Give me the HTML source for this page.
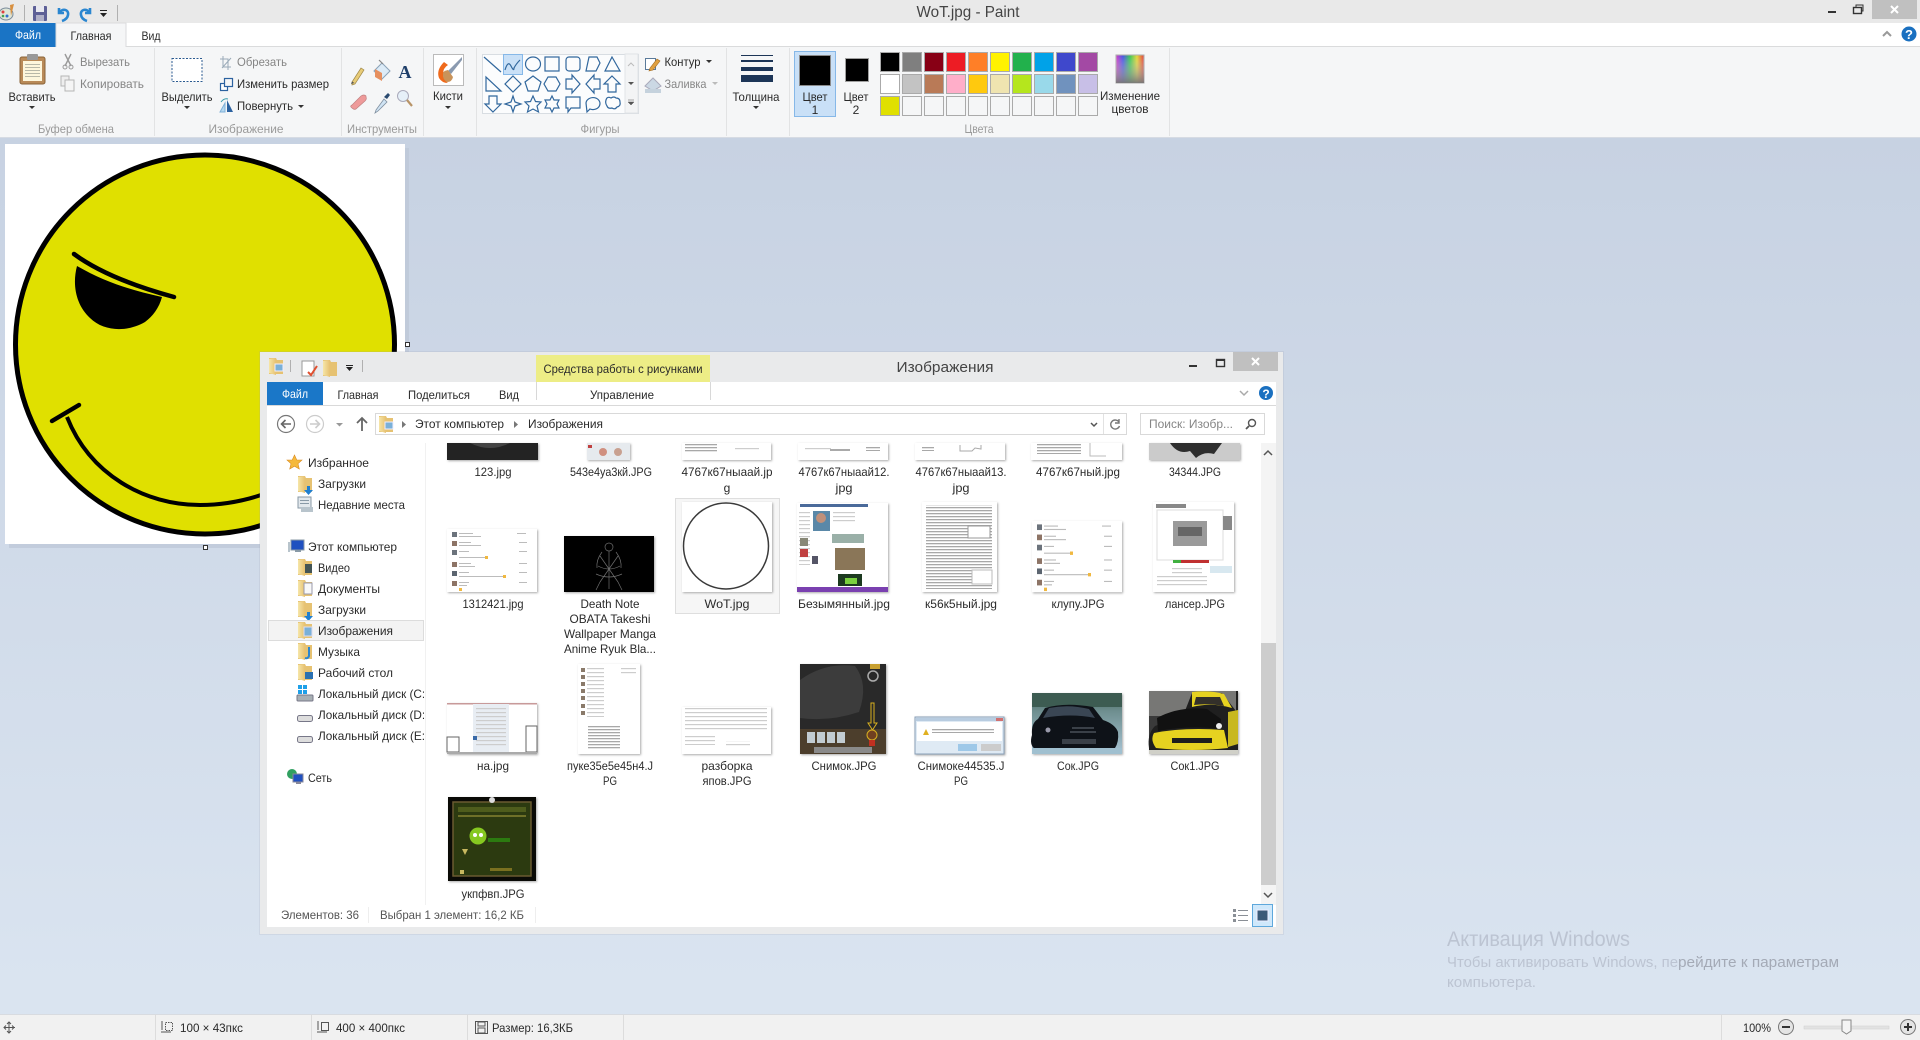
<!DOCTYPE html>
<html lang="ru"><head><meta charset="utf-8"><title>WoT.jpg - Paint</title>
<style>
html,body{margin:0;padding:0;background:#dbe5f1}
body{width:1920px;height:1040px;overflow:hidden}
svg{display:block;filter:blur(.35px)}
text{font-family:"Liberation Sans","Noto Sans CJK SC",sans-serif;font-size:12px;fill:#2a2a2a}
.c{text-anchor:middle}
.g{fill:#858585}
.l{fill:#9a9a9a}
.sh{fill:none;stroke:#31679d;stroke-width:1.2}
.th{filter:drop-shadow(1px 1px 1px #aaa)}
</style></head><body>
<svg width="1920" height="1040" viewBox="0 0 1920 1040" xmlns="http://www.w3.org/2000/svg">
<defs>
<linearGradient id="bg" x1="0" y1="0" x2="0" y2="1"><stop offset="0" stop-color="#c4cfe0"/><stop offset="1" stop-color="#dbe5f1"/></linearGradient>
<linearGradient id="rb" x1="0" y1="0" x2="1" y2="0"><stop offset="0" stop-color="#d020c0"/><stop offset=".25" stop-color="#3040e0"/><stop offset=".5" stop-color="#20c040"/><stop offset=".75" stop-color="#e0d020"/><stop offset="1" stop-color="#e02020"/></linearGradient>
<linearGradient id="rb2" x1="0" y1="0" x2="0" y2="1"><stop offset="0" stop-color="#fff" stop-opacity=".1"/><stop offset="1" stop-color="#777" stop-opacity=".95"/></linearGradient>
<linearGradient id="sky" x1="0" y1="0" x2="0" y2="1"><stop offset="0" stop-color="#3f5f55"/><stop offset=".3" stop-color="#6f8f90"/><stop offset="1" stop-color="#a8c4d4"/></linearGradient>
<linearGradient id="fold" x1="0" y1="0" x2="1" y2="0"><stop offset="0" stop-color="#f6e6a8"/><stop offset="1" stop-color="#e6c070"/></linearGradient>
<pattern id="tl" width="60" height="3" patternUnits="userSpaceOnUse"><rect width="60" height="1.300" fill="#a8a8a8"/></pattern>
<pattern id="tl2" width="60" height="4" patternUnits="userSpaceOnUse"><rect width="60" height="1.200" fill="#cdcdcd"/></pattern>
<clipPath id="side"><rect x="267" y="443" width="157" height="400"/></clipPath>
<g id="folder"><path d="M0 0h7l1 2h6v14H0z" fill="#e6c272"/><path d="M0 1l7-1v17l-7-2z" fill="url(#fold)"/></g>
<g id="chat">
<rect width="90" height="63" fill="#fff"/>
<g fill="#6c737c"><rect x="5" y="3" width="5" height="5"/><rect x="5" y="21" width="5" height="5"/></g>
<g fill="#8d7466"><rect x="5" y="12" width="5" height="5"/><rect x="5" y="33" width="5" height="5"/><rect x="5" y="52" width="5" height="5"/></g>
<rect x="5" y="42" width="5" height="5" fill="#5c6570"/>
<g fill="#bcbcbc"><rect x="12" y="4" width="14" height="1"/><rect x="12" y="7" width="22" height="1"/><rect x="12" y="13" width="12" height="1"/><rect x="12" y="16" width="22" height="1"/><rect x="12" y="22" width="10" height="1"/><rect x="12" y="28" width="26" height="1"/><rect x="12" y="34" width="12" height="1"/><rect x="12" y="37" width="16" height="1"/><rect x="12" y="43" width="10" height="1"/><rect x="12" y="47" width="44" height="1"/><rect x="12" y="53" width="10" height="1"/><rect x="12" y="56" width="8" height="1"/><rect x="70" y="4" width="9" height="1"/><rect x="72" y="13" width="8" height="1"/><rect x="72" y="22" width="8" height="1"/><rect x="72" y="34" width="8" height="1"/><rect x="72" y="43" width="8" height="1"/><rect x="72" y="53" width="8" height="1"/></g>
<g fill="#f0b840"><rect x="38" y="27" width="3" height="3"/><rect x="56" y="46" width="3" height="3"/><rect x="12" y="59" width="3" height="3"/></g>
</g>
</defs>

<!-- Paint chrome -->
<rect width="1920" height="1040" fill="url(#bg)"/>
<rect width="1920" height="23" fill="#e9e9e9"/>
<rect y="23" width="1920" height="24" fill="#fff"/>
<rect y="46" width="1920" height="1" fill="#dadbdc"/>
<rect y="47" width="1920" height="90" fill="#f5f6f7"/>
<rect y="137" width="1920" height="1" fill="#d6dbe3"/>

<!-- QAT -->
<ellipse cx="6" cy="14" rx="7" ry="6" fill="#dfe6d8" stroke="#7a8a9a"/><circle cx="3" cy="12" r="1.500" fill="#e04040"/><circle cx="7" cy="16" r="1.500" fill="#3070d0"/><circle cx="3" cy="16" r="1.300" fill="#40a050"/><path d="M10 5l4-1l-3 12z" fill="#d89040"/>
<rect x="24" y="5" width="1" height="16" fill="#b0b0b0"/>
<rect x="33" y="6" width="14" height="15" rx="1" fill="#5d5f96"/><rect x="36" y="6" width="8" height="6" fill="#e8e8f0"/><rect x="36" y="15" width="8" height="6" fill="#b0b0c8"/>
<path d="M59 8v5h5M59 13c3-5 10-4 9 2c-.5 3-3 5-6 6" fill="none" stroke="#2a86d0" stroke-width="2.600"/>
<path d="M90 8v5h-5M90 13c-3-5-10-4-9 2c.5 3 3 5 6 6" fill="none" stroke="#2a86d0" stroke-width="2.600"/>
<rect x="100" y="10" width="7" height="1" fill="#222"/><path d="M100 13h7l-3.500 4z" fill="#222"/>
<rect x="117" y="5" width="1" height="16" fill="#b0b0b0"/>
<text x="968" y="17" class="c" style="font-size:16px;fill:#444" textLength="103" lengthAdjust="spacingAndGlyphs">WoT.jpg - Paint</text>
<rect x="1828" y="11" width="8" height="2" fill="#333"/>
<rect x="1853.500" y="7.500" width="8" height="6" fill="none" stroke="#333" stroke-width="1.400"/><path d="M1856 7V5h7v6h-1.500" fill="none" stroke="#333"/>
<rect x="1872" y="0" width="45" height="19" fill="#c0c0c0"/>
<path d="M1891 6l7 7m0-7l-7 7" stroke="#fff" stroke-width="2"/>
<path d="M1883 36l4-4l4 4" fill="none" stroke="#999" stroke-width="2"/>
<circle cx="1909" cy="34" r="7.500" fill="#1a70c0"/><text x="1909" y="39" class="c" style="font-size:13px;font-weight:bold;fill:#fff">?</text>

<!-- Tabs -->
<rect x="0" y="23" width="56" height="24" fill="#1a74c5"/>
<text x="28" y="39" class="c" style="fill:#fff" textLength="26" lengthAdjust="spacingAndGlyphs">Файл</text>
<path d="M56 47V23h70v24" fill="#f5f6f7" stroke="#dadbdc"/>
<text x="91" y="40" class="c" textLength="41" lengthAdjust="spacingAndGlyphs">Главная</text>
<text x="151" y="40" class="c" textLength="19" lengthAdjust="spacingAndGlyphs">Вид</text>

<!-- group separators -->
<g fill="#e2e3e4"><rect x="154" y="48" width="1" height="88"/><rect x="341" y="48" width="1" height="88"/><rect x="423" y="48" width="1" height="88"/><rect x="476" y="48" width="1" height="88"/><rect x="726" y="48" width="1" height="88"/><rect x="789" y="48" width="1" height="88"/><rect x="1169" y="48" width="1" height="88"/></g>

<!-- Clipboard -->
<rect x="20" y="57" width="25" height="27" rx="2" fill="#b98a58" stroke="#8a6438"/><rect x="23" y="61" width="19" height="20" fill="#fdf6dc"/><g fill="#b8b8a8"><rect x="25" y="64" width="15" height="1"/><rect x="25" y="67" width="15" height="1"/><rect x="25" y="70" width="15" height="1"/><rect x="25" y="73" width="15" height="1"/><rect x="25" y="76" width="15" height="1"/></g><rect x="27" y="54" width="11" height="6" rx="1" fill="#999"/>
<text x="32" y="101" class="c" textLength="47" lengthAdjust="spacingAndGlyphs">Вставить</text>
<path d="M29 106h6l-3 3z" fill="#333"/>
<path d="M65 54l6 12M71 54l-6 12" stroke="#9a9a9a" stroke-width="1.400"/><circle cx="65" cy="67" r="2" fill="none" stroke="#9a9a9a"/><circle cx="71" cy="67" r="2" fill="none" stroke="#9a9a9a"/>
<text x="80" y="66" class="g" textLength="50" lengthAdjust="spacingAndGlyphs">Вырезать</text>
<rect x="61" y="76" width="8" height="10" fill="#eee" stroke="#b5b5b5"/><rect x="65" y="80" width="9" height="11" fill="#f5f5f5" stroke="#b5b5b5"/>
<text x="80" y="88" class="g" textLength="64" lengthAdjust="spacingAndGlyphs">Копировать</text>
<text x="76" y="133" class="c l" textLength="76" lengthAdjust="spacingAndGlyphs">Буфер обмена</text>

<!-- Image -->
<rect x="172" y="58.500" width="30" height="23" fill="#fff" stroke="#2a5a90" stroke-dasharray="2 1.500"/>
<text x="187" y="101" class="c" textLength="51" lengthAdjust="spacingAndGlyphs">Выделить</text>
<path d="M184 106h6l-3 3z" fill="#333"/>
<path d="M223 56v11h8M220 59h8v11" fill="none" stroke="#9aaab8"/><path d="M222 68l9-10" stroke="#9aaab8"/>
<text x="237" y="66" class="g" textLength="50" lengthAdjust="spacingAndGlyphs">Обрезать</text>
<rect x="220.500" y="83.500" width="7" height="7" fill="#fff" stroke="#2c62a0" stroke-width="1.200"/><rect x="224.500" y="78.500" width="8" height="8" fill="#f5f6f7" stroke="#2c62a0" stroke-width="1.200"/>
<text x="237" y="88" textLength="92" lengthAdjust="spacingAndGlyphs">Изменить размер</text>
<path d="M220 112l5-9v9z" fill="#b5d8f0" stroke="#7fb0d8"/><path d="M227 112v-12l6 12z" fill="#2c62a0"/><path d="M221 102q3-4 7-3" fill="none" stroke="#39a"/>
<text x="237" y="110" textLength="56" lengthAdjust="spacingAndGlyphs">Повернуть</text>
<path d="M298 105h6l-3 3z" fill="#333"/>
<text x="246" y="133" class="c l" textLength="75" lengthAdjust="spacingAndGlyphs">Изображение</text>

<!-- Tools -->
<path d="M352 82l9-14l3 2l-9 14l-3 1z" fill="#e8cc78" stroke="#a08848" stroke-width=".7"/><path d="M351 84l1-2.500l2.500 1.500z" fill="#555"/>
<path d="M374 71l8-8l8 8l-8 8z" fill="#dcebf7" stroke="#8aa2b8"/><path d="M375 69l7 4v8l-7-4z" fill="#e69060"/><path d="M379 60l4 4" stroke="#888" stroke-width="1.200"/>
<text x="405" y="78" class="c" style="font-family:'Liberation Serif',serif;font-size:18px;font-weight:bold;fill:#1f3f6a">A</text>
<path d="M352 105l9-9q3-2 5 0l0 1q1 2-1 4l-9 8q-2 1-4-1l-1-1q-1-1 1-2z" fill="#ee9a9a" stroke="#c08080" stroke-width=".7"/>
<path d="M376 110l8-11l3 3l-9 9l-3 2z" fill="#d0e4f4" stroke="#8090a0" stroke-width=".8"/><path d="M384 97l4-4l2 2l-3 4z" fill="#2a4a70"/>
<circle cx="403" cy="96" r="5.500" fill="#e6f0f8" stroke="#aab"/><path d="M407 100l5 6" stroke="#b89468" stroke-width="2.200"/>
<text x="382" y="133" class="c l" textLength="70" lengthAdjust="spacingAndGlyphs">Инструменты</text>

<!-- Brushes -->
<rect x="433.500" y="54.500" width="30" height="31" fill="#fff" stroke="#bbb"/>
<path d="M462 57l-14 14l3 3l11-14z" fill="#8a9ab0"/><path d="M448 70q-6 1-7 6q-1 6 6 6q5 0 6-5z" fill="#c9935a"/><path d="M444 62q-8 8-5 16q3 5 9 5q-6-4-5-9q0-6 5-9z" fill="#ef6a1c"/>
<text x="448" y="100" class="c" textLength="30" lengthAdjust="spacingAndGlyphs">Кисти</text>
<path d="M445 106h6l-3 3z" fill="#333"/>

<!-- Shapes -->
<rect x="482.500" y="54.500" width="156" height="59" fill="#fbfcfd" stroke="#d8dde2"/>
<rect x="503.500" y="54.500" width="19" height="20" fill="#c9e0f7" stroke="#86b8e8"/>
<g class="sh">
<path d="M484 57l17 15"/>
<path d="M505 70q3-10 6-4t3 2q2-4 6-8"/>
<ellipse cx="533" cy="64" rx="7.500" ry="7"/>
<rect x="545" y="57" width="14" height="14"/>
<rect x="566" y="57" width="14" height="14" rx="3"/>
<path d="M586 71l3-14h8l3 6l-4 8z"/>
<path d="M612 57l8 14h-15z"/>
<path d="M486 77v14h15z"/>
<path d="M513 76l8 8l-8 8l-8-8z"/>
<path d="M533 76l8 6l-3 9h-10l-3-9z"/>
<path d="M548 77h8l4 7l-4 7h-8l-4-7z"/>
<path d="M566 79h6v-4l8 9l-8 9v-4h-6z"/>
<path d="M600 79h-6v-4l-8 9l8 9v-4h6z"/>
<path d="M612 76l8 8h-4v8h-8v-8h-4z"/>
<path d="M493 112l8-8h-4v-8h-8v8h-4z"/>
<path d="M513 96l2 6l6 2l-6 2l-2 6l-2-6l-6-2l6-2z"/>
<path d="M533 96l2.500 5.500l5.500.5l-4 4l1.500 6l-5.500-3l-5.500 3l1.500-6l-4-4l5.500-.5z"/>
<path d="M552 96l2 4h5l-2 4l2 4h-5l-2 4l-2-4h-5l2-4l-2-4h5z"/>
<path d="M566 97h14v11h-9l-3 4v-4h-2z"/>
<path d="M586 103a7 6 0 1 1 4 6l-3 3z"/>
<path d="M606 100q1-4 5-2q3-2 5 0q4 0 4 4q1 4-3 5q-2 3-5 1q-4 1-5-2q-2-3-1-6z"/>
</g>
<rect x="625" y="54" width="13" height="59" fill="#f3f4f5" stroke="#e0e3e6"/>
<path d="M628 66l3-3l3 3" fill="none" stroke="#bbb"/><path d="M628 82h6l-3 3z" fill="#555"/><path d="M628 100h6M628 102h6l-3 3z" fill="#555" stroke="#555" stroke-width=".5"/>
<text x="600" y="133" class="c l" textLength="39" lengthAdjust="spacingAndGlyphs">Фигуры</text>
<rect x="645.500" y="58.500" width="10" height="11" fill="#fff" stroke="#5a7a9a"/><path d="M650 68l7-9l3 2l-7 9l-4 1z" fill="#e0a040" stroke="#a06a20" stroke-width=".6"/>
<text x="664.500" y="66" textLength="36" lengthAdjust="spacingAndGlyphs">Контур</text><path d="M706 60h6l-3 3z" fill="#333"/>
<path d="M645 86l8-8l8 8l-8 5z" fill="#cbd8e4" stroke="#aab"/><rect x="645" y="89" width="16" height="4" fill="#c5d2dd"/>
<text x="664.500" y="88" class="g" textLength="42" lengthAdjust="spacingAndGlyphs">Заливка</text><path d="M712 82h6l-3 3z" fill="#bbb"/>

<!-- Thickness -->
<g fill="#1c3557"><rect x="741" y="55" width="32" height="1"/><rect x="741" y="60" width="32" height="2"/><rect x="741" y="67" width="32" height="4"/><rect x="741" y="75" width="32" height="7"/></g>
<text x="756" y="101" class="c" textLength="47" lengthAdjust="spacingAndGlyphs">Толщина</text>
<path d="M753 106h6l-3 3z" fill="#333"/>

<!-- Colors -->
<rect x="794.500" y="51.500" width="41" height="65" fill="#c9e0f7" stroke="#86b8e8"/>
<rect x="799.500" y="55.500" width="31" height="30" fill="#000" stroke="#8a8a8a" stroke-width="1"/>
<text x="815" y="101" class="c" textLength="25" lengthAdjust="spacingAndGlyphs">Цвет</text><text x="815" y="114" class="c">1</text>
<rect x="845.500" y="58.500" width="23" height="23" fill="#000" stroke="#a0a0a0" stroke-width="1"/>
<text x="856" y="101" class="c" textLength="25" lengthAdjust="spacingAndGlyphs">Цвет</text><text x="856" y="114" class="c">2</text>
<g stroke="#aaa">
<rect x="880.500" y="52.500" width="19" height="19" fill="#000"/><rect x="902.500" y="52.500" width="19" height="19" fill="#7f7f7f"/><rect x="924.500" y="52.500" width="19" height="19" fill="#880015"/><rect x="946.500" y="52.500" width="19" height="19" fill="#ed1c24"/><rect x="968.500" y="52.500" width="19" height="19" fill="#ff7f27"/><rect x="990.500" y="52.500" width="19" height="19" fill="#fff200"/><rect x="1012.500" y="52.500" width="19" height="19" fill="#22b14c"/><rect x="1034.500" y="52.500" width="19" height="19" fill="#00a2e8"/><rect x="1056.500" y="52.500" width="19" height="19" fill="#3f48cc"/><rect x="1078.500" y="52.500" width="19" height="19" fill="#a349a4"/>
<rect x="880.500" y="74.500" width="19" height="19" fill="#fff"/><rect x="902.500" y="74.500" width="19" height="19" fill="#c3c3c3"/><rect x="924.500" y="74.500" width="19" height="19" fill="#b97a57"/><rect x="946.500" y="74.500" width="19" height="19" fill="#ffaec9"/><rect x="968.500" y="74.500" width="19" height="19" fill="#ffc90e"/><rect x="990.500" y="74.500" width="19" height="19" fill="#efe4b0"/><rect x="1012.500" y="74.500" width="19" height="19" fill="#b5e61d"/><rect x="1034.500" y="74.500" width="19" height="19" fill="#99d9ea"/><rect x="1056.500" y="74.500" width="19" height="19" fill="#7092be"/><rect x="1078.500" y="74.500" width="19" height="19" fill="#c8bfe7"/>
<rect x="880.500" y="96.500" width="19" height="19" fill="#e0e000"/><rect x="902.500" y="96.500" width="19" height="19" fill="#f5f6f7"/><rect x="924.500" y="96.500" width="19" height="19" fill="#f5f6f7"/><rect x="946.500" y="96.500" width="19" height="19" fill="#f5f6f7"/><rect x="968.500" y="96.500" width="19" height="19" fill="#f5f6f7"/><rect x="990.500" y="96.500" width="19" height="19" fill="#f5f6f7"/><rect x="1012.500" y="96.500" width="19" height="19" fill="#f5f6f7"/><rect x="1034.500" y="96.500" width="19" height="19" fill="#f5f6f7"/><rect x="1056.500" y="96.500" width="19" height="19" fill="#f5f6f7"/><rect x="1078.500" y="96.500" width="19" height="19" fill="#f5f6f7"/>
</g>
<rect x="1116" y="55" width="28" height="28" fill="url(#rb)" stroke="#aaa"/><rect x="1116" y="55" width="28" height="28" fill="url(#rb2)"/>
<text x="1130" y="100" class="c" textLength="60" lengthAdjust="spacingAndGlyphs">Изменение</text>
<text x="1130" y="113" class="c" textLength="37" lengthAdjust="spacingAndGlyphs">цветов</text>
<text x="979" y="133" class="c l" textLength="29" lengthAdjust="spacingAndGlyphs">Цвета</text>

<!-- Canvas -->
<rect x="9" y="148" width="400" height="400" fill="#bcc6d6" opacity=".7"/>
<rect x="5" y="144" width="400" height="400" fill="#fff"/>
<circle cx="205" cy="344.500" r="189.500" fill="#e0e000" stroke="#000" stroke-width="5"/>
<path d="M77 266C72 285 76 305 90 318C104 332 128 332 145 322C153 316 159 308 162 297C130 290 105 282 77 266Z" fill="#000"/>
<path d="M74 254Q108 279 174 297" fill="none" stroke="#000" stroke-width="4.500" stroke-linecap="round"/>
<path d="M67 417C90 475 145 505 200 505C225 505 250 500 275 490" fill="none" stroke="#000" stroke-width="4"/>
<path d="M52 421L79 405" stroke="#000" stroke-width="4.500" stroke-linecap="round"/>
<rect x="405.500" y="342.500" width="4" height="4" fill="#fff" stroke="#333"/>
<rect x="203.500" y="545.500" width="4" height="4" fill="#fff" stroke="#333"/>

<!-- Activation -->
<text x="1447" y="946" style="font-size:21px;fill:#bcc4d2" textLength="183" lengthAdjust="spacingAndGlyphs">Активация Windows</text>
<text x="1447" y="967" style="font-size:15px;fill:#bcc4d2" textLength="231" lengthAdjust="spacingAndGlyphs">Чтобы активировать Windows, пе</text>
<text x="1678" y="967" style="font-size:15px;fill:#a4aab6" textLength="161" lengthAdjust="spacingAndGlyphs">рейдите к параметрам</text>
<text x="1447" y="987" style="font-size:15px;fill:#bcc4d2" textLength="89" lengthAdjust="spacingAndGlyphs">компьютера.</text>

<!-- Status bar -->
<rect y="1014" width="1920" height="26" fill="#f1f1f1"/><rect y="1014" width="1920" height="1" fill="#d8dbe0"/>
<g fill="#dcdcdc"><rect x="155" y="1015" width="1" height="25"/><rect x="311" y="1015" width="1" height="25"/><rect x="467" y="1015" width="1" height="25"/><rect x="623" y="1015" width="1" height="25"/><rect x="1721" y="1015" width="1" height="25"/></g>
<path d="M9 1022v11M4 1027.500h11M7 1024l2-2l2 2M7 1031l2 2l2-2M6 1025.500l-2 2l2 2M12 1025.500l2 2l-2 2" fill="none" stroke="#555"/>
<rect x="165.500" y="1022.500" width="7" height="8" fill="none" stroke="#555" stroke-dasharray="1.500 1"/><path d="M162 1021v9M161 1032h10" stroke="#555"/>
<text x="180" y="1032" textLength="63" lengthAdjust="spacingAndGlyphs">100 × 43пкс</text>
<rect x="321.500" y="1022.500" width="7" height="8" fill="none" stroke="#555"/><path d="M318 1021v9M317 1032h10" stroke="#555"/>
<text x="336" y="1032" textLength="69" lengthAdjust="spacingAndGlyphs">400 × 400пкс</text>
<rect x="475.500" y="1021.500" width="12" height="12" fill="none" stroke="#555"/><rect x="478" y="1022" width="7" height="4" fill="none" stroke="#555"/><rect x="478" y="1028" width="7" height="5" fill="none" stroke="#555"/>
<text x="492" y="1032" textLength="81" lengthAdjust="spacingAndGlyphs">Размер: 16,3КБ</text>
<text x="1743" y="1032" textLength="28" lengthAdjust="spacingAndGlyphs">100%</text>
<circle cx="1786" cy="1027" r="7.500" fill="#e4e4e4" stroke="#777"/><rect x="1782" y="1026" width="8" height="2" fill="#333"/>
<rect x="1804" y="1026" width="85" height="3" fill="#e2e2e2" stroke="#d0d0d0" stroke-width=".5"/>
<path d="M1842 1020h9v11l-4.500 3l-4.500-3z" fill="#f4f4f4" stroke="#888"/>
<circle cx="1908" cy="1027" r="7.500" fill="#e4e4e4" stroke="#777"/><path d="M1904 1027h8M1908 1023v8" stroke="#333" stroke-width="2"/>

<!-- Explorer window -->
<rect x="259" y="351" width="1025" height="584" fill="#9aa3b0" opacity=".18"/>
<rect x="260" y="352" width="1023" height="582" fill="#e9eaeb"/>
<rect x="267" y="382" width="1009" height="545" fill="#fff"/>
<rect x="267" y="405" width="1009" height="1" fill="#d9d9d9"/>

<!-- Explorer title -->
<use href="#folder" x="269" y="358"/><rect x="275" y="364" width="8" height="7" fill="#7ab0d8" stroke="#eef"/>
<rect x="290" y="360" width="1" height="12" fill="#b0b0b0"/>
<rect x="302" y="361" width="12" height="15" fill="#fff" stroke="#999"/><path d="M308 372l3 3l6-9" fill="none" stroke="#e05030" stroke-width="2"/>
<use href="#folder" x="323" y="360"/>
<rect x="346" y="365" width="7" height="1" fill="#222"/><path d="M346 367h7l-3.500 4z" fill="#222"/>
<rect x="362" y="360" width="1" height="12" fill="#b0b0b0"/>
<rect x="536" y="355" width="174" height="27" fill="#eded86"/>
<text x="623" y="373" class="c" textLength="159" lengthAdjust="spacingAndGlyphs">Средства работы с рисунками</text>
<text x="945" y="372" class="c" style="font-size:15px;fill:#444" textLength="97" lengthAdjust="spacingAndGlyphs">Изображения</text>
<rect x="1189" y="365" width="8" height="2" fill="#333"/>
<rect x="1216.500" y="359.500" width="8" height="7" fill="none" stroke="#333" stroke-width="1.400"/><rect x="1216" y="359" width="9" height="2" fill="#333"/>
<rect x="1233" y="352" width="45" height="19" fill="#c0c0c0"/><path d="M1252 358l7 7m0-7l-7 7" stroke="#fff" stroke-width="2"/>

<!-- Explorer tabs -->
<rect x="267" y="382" width="56" height="23" fill="#1a77c8"/>
<text x="295" y="398" class="c" style="fill:#fff" textLength="26" lengthAdjust="spacingAndGlyphs">Файл</text>
<text x="358" y="399" class="c" textLength="41" lengthAdjust="spacingAndGlyphs">Главная</text>
<text x="439" y="399" class="c" textLength="62" lengthAdjust="spacingAndGlyphs">Поделиться</text>
<text x="509" y="399" class="c" textLength="20" lengthAdjust="spacingAndGlyphs">Вид</text>
<text x="622" y="399" class="c" textLength="64" lengthAdjust="spacingAndGlyphs">Управление</text>
<rect x="536" y="382" width="1" height="18" fill="#d8d8d8"/><rect x="710" y="382" width="1" height="18" fill="#d8d8d8"/>
<path d="M1240 391l4 4l4-4" fill="none" stroke="#aaa" stroke-width="1.500"/>
<circle cx="1266" cy="393" r="7" fill="#1a70c0"/><text x="1266" y="398" class="c" style="font-size:12px;font-weight:bold;fill:#fff">?</text>

<!-- Nav -->
<circle cx="286" cy="424" r="8.500" fill="#fff" stroke="#777" stroke-width="1.200"/><path d="M291 424h-9M285.500 420l-4 4l4 4" fill="none" stroke="#666" stroke-width="1.600"/>
<circle cx="315" cy="424" r="8.500" fill="#fff" stroke="#ccc" stroke-width="1.200"/><path d="M310 424h9M315.500 420l4 4l-4 4" fill="none" stroke="#ccc" stroke-width="1.600"/>
<path d="M336 423h7l-3.500 3.500z" fill="#999"/>
<path d="M362 431v-13M357 423l5-5l5 5" fill="none" stroke="#666" stroke-width="1.800"/>
<rect x="375.500" y="413.500" width="751" height="21" fill="#fff" stroke="#d9d9d9"/>
<use href="#folder" x="379" y="416"/><rect x="385" y="422" width="8" height="7" fill="#7ab0d8" stroke="#eef"/>
<path d="M402 421l4 3.500l-4 3.500z" fill="#777"/>
<text x="415" y="428" textLength="89" lengthAdjust="spacingAndGlyphs">Этот компьютер</text>
<path d="M514 421l4 3.500l-4 3.500z" fill="#777"/>
<text x="528" y="428" textLength="75" lengthAdjust="spacingAndGlyphs">Изображения</text>
<path d="M1091 423l3 3l3-3" fill="none" stroke="#555" stroke-width="1.500"/>
<rect x="1103" y="414" width="1" height="20" fill="#e2e2e2"/>
<path d="M1119 422a4.500 4.500 0 1 0 .5 4M1119 419v4h-4" fill="none" stroke="#777" stroke-width="1.400"/>
<rect x="1140.500" y="413.500" width="124" height="21" fill="#fff" stroke="#d9d9d9"/>
<text x="1149" y="428" class="g" textLength="84" lengthAdjust="spacingAndGlyphs">Поиск: Изобр...</text>
<circle cx="1252" cy="423" r="3.500" fill="none" stroke="#555" stroke-width="1.400"/><path d="M1249 426l-3 3" stroke="#555" stroke-width="1.800"/>

<!-- Sidebar -->
<rect x="425" y="443" width="1" height="462" fill="#f1f1f1"/>
<path d="M294.500 455l2.300 5h5.200l-4 3.700l1.300 5.300l-4.800-2.800l-4.800 2.800l1.300-5.300l-4-3.700h5.200z" fill="#f5b93c" stroke="#d98a20" stroke-width=".6"/>
<text x="308" y="467" textLength="61" lengthAdjust="spacingAndGlyphs">Избранное</text>
<use href="#folder" x="298" y="476"/><path d="M307 486h3v4h3l-4.500 5l-4.500-5h3z" fill="#1f7fd0"/>
<text x="318" y="488" textLength="48" lengthAdjust="spacingAndGlyphs">Загрузки</text>
<rect x="298" y="497" width="13" height="11" fill="#e2e8ec" stroke="#8899a6"/><rect x="301" y="507" width="12" height="5" fill="#b8c4cc"/><g fill="#8899a6"><rect x="300" y="500" width="9" height="1"/><rect x="300" y="503" width="9" height="1"/></g>
<text x="318" y="509" textLength="87" lengthAdjust="spacingAndGlyphs">Недавние места</text>
<rect x="291" y="540" width="13" height="10" fill="#1f50c0" stroke="#8899a6"/><rect x="295" y="550" width="6" height="2" fill="#8899a6"/><rect x="288" y="542" width="2" height="10" fill="#b8c4cc"/>
<text x="308" y="551" textLength="89" lengthAdjust="spacingAndGlyphs">Этот компьютер</text>
<use href="#folder" x="298" y="559"/><rect x="305" y="564" width="7" height="9" fill="#455"/>
<text x="318" y="572" textLength="32" lengthAdjust="spacingAndGlyphs">Видео</text>
<use href="#folder" x="298" y="580"/><rect x="304" y="583" width="8" height="11" fill="#f8f8f8" stroke="#99a"/>
<text x="318" y="593" textLength="62" lengthAdjust="spacingAndGlyphs">Документы</text>
<use href="#folder" x="298" y="601"/><path d="M307 612h3v4h3l-4.500 5l-4.500-5h3z" fill="#1f7fd0"/>
<text x="318" y="614" textLength="48" lengthAdjust="spacingAndGlyphs">Загрузки</text>
<rect x="268.500" y="620.500" width="155" height="20" fill="#f3f3f3" stroke="#dcdcdc"/>
<use href="#folder" x="298" y="622"/><rect x="304" y="627" width="8" height="9" fill="#7ab0d8" stroke="#dde"/>
<text x="318" y="635" textLength="75" lengthAdjust="spacingAndGlyphs">Изображения</text>
<use href="#folder" x="298" y="643"/><path d="M309 647v9q-1 3-4 2" fill="none" stroke="#2a86d0" stroke-width="2"/>
<text x="318" y="656" textLength="42" lengthAdjust="spacingAndGlyphs">Музыка</text>
<use href="#folder" x="298" y="664"/><rect x="305" y="672" width="8" height="7" fill="#2a70b0"/>
<text x="318" y="677" textLength="75" lengthAdjust="spacingAndGlyphs">Рабочий стол</text>
<g fill="#1fa0e8"><rect x="298" y="685" width="4" height="4"/><rect x="303" y="685" width="4" height="4"/><rect x="298" y="690" width="4" height="4"/><rect x="303" y="690" width="4" height="4"/></g><rect x="297" y="695" width="16" height="6" rx="1" fill="#a8b0b4" stroke="#778"/>
<g clip-path="url(#side)">
<text x="318" y="698" textLength="111" lengthAdjust="spacingAndGlyphs">Локальный диск (C:)</text>
<text x="318" y="719" textLength="111" lengthAdjust="spacingAndGlyphs">Локальный диск (D:)</text>
<text x="318" y="740" textLength="111" lengthAdjust="spacingAndGlyphs">Локальный диск (E:)</text>
</g>
<rect x="297.500" y="715.500" width="15" height="6" rx="2" fill="#ddd" stroke="#778"/>
<rect x="297.500" y="736.500" width="15" height="6" rx="2" fill="#ddd" stroke="#778"/>
<circle cx="292" cy="774" r="5" fill="#30a060"/><rect x="293" y="774" width="10" height="8" fill="#1f50c0" stroke="#889"/><rect x="296" y="782" width="5" height="2" fill="#889"/>
<text x="308" y="782" textLength="24" lengthAdjust="spacingAndGlyphs">Сеть</text>

<!-- File grid: row 1 -->
<g class="th">
<rect x="447" y="443" width="91" height="17" fill="#232323"/>
<rect x="587" y="443" width="43" height="17" fill="#e6eaee"/>
<rect x="682" y="443" width="89" height="17" fill="#fff"/>
<rect x="798" y="443" width="90" height="17" fill="#fff"/>
<rect x="915" y="443" width="90" height="17" fill="#fff"/>
<rect x="1031" y="443" width="91" height="17" fill="#fff"/>
<rect x="1149" y="443" width="91" height="17" fill="#cbcbcb"/>
</g>
<path d="M470 443q20 10 40 0z" fill="#444"/>
<circle cx="603" cy="452" r="4" fill="#d09080"/><circle cx="618" cy="452" r="4" fill="#c8a090"/><rect x="588" y="445" width="4" height="3" fill="#c04040"/>
<rect x="685" y="444" width="32" height="8" fill="url(#tl)"/><rect x="735" y="446" width="24" height="4" fill="url(#tl2)"/>
<rect x="805" y="446" width="26" height="6" fill="url(#tl2)"/><rect x="830" y="449" width="20" height="2" fill="#aaa"/><rect x="866" y="447" width="14" height="4" fill="url(#tl)"/>
<rect x="922" y="446" width="12" height="5" fill="url(#tl)"/><path d="M960 445v6h12l3-3l6 1v-4" fill="none" stroke="#aaa"/>
<rect x="1037" y="444" width="44" height="10" fill="url(#tl)"/><path d="M1090 443v13h16" fill="none" stroke="#bbb"/>
<path d="M1170 443q8 12 20 8l6 7q8-7 18-4l8-11z" fill="#2e2e2e"/>
<text x="493" y="476" class="c" textLength="37" lengthAdjust="spacingAndGlyphs">123.jpg</text>
<text x="611" y="476" class="c" textLength="82" lengthAdjust="spacingAndGlyphs">543e4ya3кй.JPG</text>
<text x="727" y="476" class="c" textLength="91" lengthAdjust="spacingAndGlyphs">4767к67ныаай.jp</text><text x="727" y="492" class="c">g</text>
<text x="844" y="476" class="c" textLength="91" lengthAdjust="spacingAndGlyphs">4767к67ныаай12.</text><text x="844" y="492" class="c" textLength="17" lengthAdjust="spacingAndGlyphs">jpg</text>
<text x="961" y="476" class="c" textLength="91" lengthAdjust="spacingAndGlyphs">4767к67ныаай13.</text><text x="961" y="492" class="c" textLength="17" lengthAdjust="spacingAndGlyphs">jpg</text>
<text x="1078" y="476" class="c" textLength="84" lengthAdjust="spacingAndGlyphs">4767к67ный.jpg</text>
<text x="1195" y="476" class="c" textLength="52" lengthAdjust="spacingAndGlyphs">34344.JPG</text>

<!-- Row 2 -->
<rect x="675.500" y="498.500" width="104" height="115" fill="#f6f6f6" stroke="#dedede"/>
<use href="#chat" x="447" y="529" class="th"/>
<rect x="564" y="536" width="90" height="56" fill="#000" class="th"/>
<g fill="none" stroke="#8a8a8a" stroke-width=".7" opacity=".8"><circle cx="609" cy="547" r="4"/><path d="M600 556l18 26M618 556l-18 26M609 551v38M598 566q11 6 22 0M596 574q13 6 26 0M602 552q-6 8-5 16M616 552q6 8 5 16M600 582l-4 8M618 582l4 8"/></g>
<rect x="682" y="502" width="90" height="90" fill="#fff" class="th"/>
<ellipse cx="726" cy="546" rx="42.500" ry="43" fill="#fff" stroke="#3a3a3a" stroke-width="1.500"/>
<rect x="797" y="503" width="91" height="89" fill="#fff" class="th"/>
<rect x="800" y="504" width="68" height="3" fill="#4a6a9a"/><rect x="813" y="511" width="17" height="20" fill="#5a88a8"/><circle cx="821" cy="518" r="5" fill="#c0907a"/>
<rect x="799" y="510" width="11" height="55" fill="url(#tl2)"/><rect x="833" y="512" width="22" height="12" fill="url(#tl2)"/>
<rect x="832" y="534" width="32" height="9" fill="#9ab0a8"/><rect x="835" y="548" width="30" height="22" fill="#8a7658"/><rect x="838" y="574" width="24" height="12" fill="#1c3a20"/><rect x="845" y="578" width="12" height="6" fill="#7ad040"/>
<rect x="800" y="538" width="8" height="8" fill="#887"/><rect x="800" y="549" width="8" height="8" fill="#c04040"/><rect x="812" y="556" width="6" height="8" fill="#556"/>
<rect x="797" y="587" width="91" height="5" fill="#7a40b0"/>
<rect x="922" y="502" width="75" height="90" fill="#fff" class="th"/>
<rect x="926" y="505" width="66" height="84" fill="url(#tl)"/>
<rect x="968" y="526" width="22" height="12" fill="#fff" stroke="#999"/><rect x="972" y="570" width="20" height="14" fill="#fff" stroke="#bbb"/>
<use href="#chat" transform="translate(1032 521) scale(1 1.130)" class="th"/>
<rect x="1153" y="502" width="81" height="90" fill="#fff" class="th"/>
<rect x="1156" y="504" width="30" height="4" fill="#888"/><rect x="1157" y="510" width="66" height="50" fill="#fff" stroke="#ddd"/>
<rect x="1173" y="521" width="34" height="25" fill="#9a9a9a"/><rect x="1178" y="527" width="24" height="9" fill="#666"/>
<rect x="1223" y="516" width="9" height="14" fill="#888"/>
<rect x="1173" y="560" width="36" height="3" fill="#c03030"/><rect x="1173" y="560" width="8" height="3" fill="#40b040"/>
<rect x="1172" y="566" width="30" height="9" fill="url(#tl2)"/><rect x="1210" y="566" width="22" height="7" fill="#d8e8f0"/><rect x="1157" y="576" width="50" height="10" fill="url(#tl2)"/>
<text x="493" y="608" class="c" textLength="61" lengthAdjust="spacingAndGlyphs">1312421.jpg</text>
<text x="610" y="608" class="c" textLength="59" lengthAdjust="spacingAndGlyphs">Death Note</text>
<text x="610" y="623" class="c" textLength="81" lengthAdjust="spacingAndGlyphs">OBATA Takeshi</text>
<text x="610" y="638" class="c" textLength="92" lengthAdjust="spacingAndGlyphs">Wallpaper Manga</text>
<text x="610" y="653" class="c" textLength="92" lengthAdjust="spacingAndGlyphs">Anime Ryuk Bla...</text>
<text x="727" y="608" class="c" textLength="45" lengthAdjust="spacingAndGlyphs">WoT.jpg</text>
<text x="844" y="608" class="c" textLength="92" lengthAdjust="spacingAndGlyphs">Безымянный.jpg</text>
<text x="961" y="608" class="c" textLength="72" lengthAdjust="spacingAndGlyphs">к56к5ный.jpg</text>
<text x="1078" y="608" class="c" textLength="53" lengthAdjust="spacingAndGlyphs">клупу.JPG</text>
<text x="1195" y="608" class="c" textLength="60" lengthAdjust="spacingAndGlyphs">лансер.JPG</text>

<!-- Row 3 -->
<rect x="447" y="703" width="90" height="51" fill="#fff" class="th"/>
<rect x="447" y="703" width="90" height="1.500" fill="#c89a9a"/><rect x="473" y="704" width="36" height="48" fill="#e8edf3"/><rect x="476" y="708" width="30" height="40" fill="url(#tl2)"/>
<rect x="447" y="737" width="12" height="15" fill="#fff" stroke="#666"/><rect x="526" y="726" width="11" height="26" fill="#fff" stroke="#666"/><rect x="473" y="736" width="4" height="4" fill="#3a6aa8"/><rect x="447" y="752" width="90" height="2" fill="#aaa"/>
<rect x="578" y="664" width="62" height="90" fill="#fff" class="th"/>
<g fill="#8a7a6a"><rect x="581" y="668" width="4" height="4"/><rect x="581" y="675" width="4" height="4"/><rect x="581" y="682" width="4" height="4"/><rect x="581" y="689" width="4" height="4"/><rect x="581" y="696" width="4" height="4"/><rect x="581" y="704" width="4" height="4"/><rect x="581" y="711" width="4" height="4"/></g>
<rect x="587" y="667" width="17" height="50" fill="url(#tl2)"/><rect x="588" y="726" width="32" height="24" fill="url(#tl)"/><rect x="621" y="667" width="15" height="8" fill="url(#tl2)"/>
<rect x="682" y="707" width="89" height="47" fill="#fff" class="th"/>
<rect x="685" y="708" width="82" height="24" fill="url(#tl2)"/><rect x="685" y="735" width="30" height="10" fill="url(#tl2)"/><rect x="726" y="741" width="24" height="5" fill="url(#tl2)"/>
<rect x="800" y="664" width="86" height="90" fill="#292929" class="th"/>
<path d="M800 680q25-18 55-14q14 18 4 46q-30 10-59 6z" fill="#3c3c3c"/><rect x="800" y="729" width="86" height="25" fill="#4c3e2c"/>
<g fill="#c2ccd2"><rect x="807" y="732" width="8" height="11"/><rect x="817" y="732" width="8" height="11"/><rect x="827" y="732" width="8" height="11"/><rect x="837" y="732" width="8" height="11"/></g><rect x="814" y="747" width="58" height="6" fill="#8a8a8a"/>
<circle cx="873" cy="676" r="5" fill="none" stroke="#aaa" stroke-width="1.500"/><rect x="870" y="664" width="10" height="5" fill="#c8a030"/>
<path d="M871 703h3v20h3l-4.500 7l-4.500-7h3z" fill="none" stroke="#d8b020"/><circle cx="872" cy="735" r="5" fill="#704020" stroke="#d8b020"/><rect x="869" y="740" width="6" height="6" fill="#c03020"/>
<rect x="915" y="717" width="89" height="37" fill="#dfeaf4" stroke="#8aa0b8" class="th"/>
<rect x="916" y="718" width="87" height="3" fill="#b8cce0"/><rect x="996" y="718" width="7" height="3" fill="#d07070"/>
<rect x="917" y="722" width="85" height="19" fill="#fff"/><path d="M923 735l3-6l3 6z" fill="#e0b020"/><rect x="932" y="728" width="62" height="5" fill="url(#tl)"/><rect x="958" y="744" width="19" height="7" fill="#9ec8e8"/><rect x="981" y="744" width="20" height="7" fill="#ccc"/>
<rect x="1032" y="693" width="90" height="61" fill="url(#sky)" class="th"/>
<rect x="1032" y="693" width="90" height="14" fill="#3d5c52"/>
<path d="M1045 708q20-6 48-1l10 13q12 4 15 12q1 10-3 16l-80 1q-6-4-3-14q-1-12 6-16z" fill="#0e1218"/><path d="M1049 708q20-4 40 1l6 9q-24-5-52 0z" fill="#3a4654"/><g fill="#3a4048"><rect x="1072" y="727" width="22" height="2"/><rect x="1070" y="731" width="26" height="2"/><rect x="1062" y="739" width="34" height="5"/></g><path d="M1032 748h90v6h-90z" fill="#a0c0d0"/><circle cx="1048" cy="730" r="2.500" fill="#99a"/>
<rect x="1149" y="691" width="89" height="63" fill="#777775" class="th"/>
<path d="M1149 716h25v30h-25z" fill="#3a3a3a"/><path d="M1192 693h30l14 18v-20h2v63h-89v-6q-2-14 6-22l28-10z" fill="#1f1f1f"/>
<path d="M1192 692q18-2 32 2l8 14q-20-6-40-1z" fill="#e6d220"/><path d="M1196 697h24l4 9q-16-3-30-1z" fill="#33302a"/>
<path d="M1157 718q22-12 50-9l14 10l-1 10q-30-4-62 2z" fill="#111"/><path d="M1154 733q30-6 70-3l4 18q-36 4-72 0q-6-8-2-15z" fill="#e6d220"/><path d="M1228 712l10-2v34l-10 3z" fill="#c8b820"/><rect x="1172" y="738" width="40" height="5" fill="#1d1d1d"/><circle cx="1219" cy="726" r="3" fill="#eee"/><rect x="1149" y="750" width="89" height="4" fill="#d0d0c8"/>
<text x="493" y="770" class="c" textLength="32" lengthAdjust="spacingAndGlyphs">на.jpg</text>
<text x="610" y="770" class="c" textLength="86" lengthAdjust="spacingAndGlyphs">пуке35е5е45н4.J</text><text x="610" y="785" class="c" textLength="14" lengthAdjust="spacingAndGlyphs">PG</text>
<text x="727" y="770" class="c" textLength="51" lengthAdjust="spacingAndGlyphs">разборка</text><text x="727" y="785" class="c" textLength="49" lengthAdjust="spacingAndGlyphs">япов.JPG</text>
<text x="844" y="770" class="c" textLength="65" lengthAdjust="spacingAndGlyphs">Снимок.JPG</text>
<text x="961" y="770" class="c" textLength="87" lengthAdjust="spacingAndGlyphs">Снимоке44535.J</text><text x="961" y="785" class="c" textLength="14" lengthAdjust="spacingAndGlyphs">PG</text>
<text x="1078" y="770" class="c" textLength="42" lengthAdjust="spacingAndGlyphs">Сок.JPG</text>
<text x="1195" y="770" class="c" textLength="49" lengthAdjust="spacingAndGlyphs">Сок1.JPG</text>

<!-- Row 4 -->
<rect x="448" y="797" width="88" height="84" fill="#0a0a06" class="th"/>
<rect x="453" y="802" width="78" height="74" fill="#2c3a10" stroke="#6a5a30" stroke-width="1.500"/>
<rect x="458" y="807" width="68" height="5" fill="#4e5c1c"/><rect x="458" y="815" width="68" height="2" fill="#6e7028"/>
<circle cx="478" cy="836" r="8.500" fill="#86c820"/><circle cx="475" cy="835" r="2" fill="#fff"/><circle cx="481" cy="835" r="2" fill="#fff"/><rect x="488" y="838" width="22" height="4" fill="#2c7a10"/>
<path d="M462 849h6l-3 6z" fill="#c8b860"/><rect x="460" y="870" width="4" height="4" fill="#c8b860"/><rect x="490" y="868" width="22" height="3" fill="#7a7020"/><circle cx="492" cy="800" r="3" fill="#ddd"/>
<text x="493" y="898" class="c" textLength="63" lengthAdjust="spacingAndGlyphs">укпфвп.JPG</text>

<!-- Scrollbar -->
<rect x="1261" y="443" width="15" height="462" fill="#f4f4f4"/>
<rect x="1261" y="643" width="15" height="242" fill="#cdcdcd"/>
<path d="M1264 455l4-4l4 4" fill="none" stroke="#555" stroke-width="1.500"/>
<path d="M1264 893l4 4l4-4" fill="none" stroke="#555" stroke-width="1.500"/>

<!-- Explorer status -->
<text x="281" y="919" style="fill:#555" textLength="78" lengthAdjust="spacingAndGlyphs">Элементов: 36</text>
<rect x="368" y="907" width="1" height="16" fill="#eee"/>
<text x="380" y="919" style="fill:#555" textLength="144" lengthAdjust="spacingAndGlyphs">Выбран 1 элемент: 16,2 КБ</text>
<rect x="535" y="907" width="1" height="16" fill="#eee"/>
<g fill="#8a8f96"><rect x="1233" y="909" width="3" height="3"/><rect x="1233" y="914" width="3" height="3"/><rect x="1233" y="919" width="3" height="3"/><rect x="1238" y="910" width="10" height="1"/><rect x="1238" y="915" width="10" height="1"/><rect x="1238" y="920" width="10" height="1"/></g>
<rect x="1252.500" y="904.500" width="20" height="22" fill="#cfe8fb" stroke="#5ea8dc"/><rect x="1257" y="910" width="11" height="11" fill="#3a5a78" stroke="#eef"/>
</svg>
</body></html>
